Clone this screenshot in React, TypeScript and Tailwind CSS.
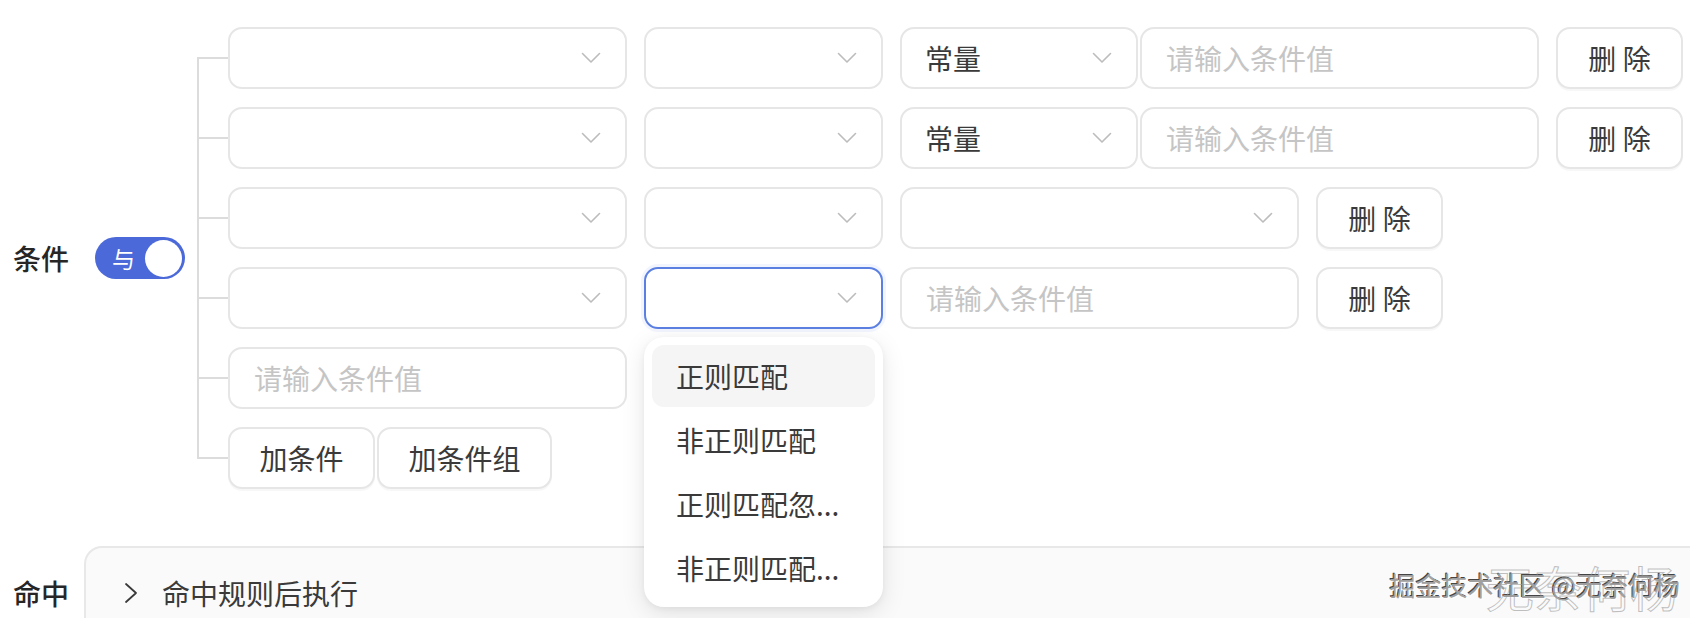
import React from "react";

const font = "font-['Noto_Sans_CJK_SC','Noto_Sans',sans-serif]";

function Chevron({ className = "" }: { className?: string }) {
  return (
    <svg width="20" height="12" viewBox="0 0 20 12" className={className} fill="none">
      <path d="M1.5 1.5 L10 10 L18.5 1.5" stroke="#bcbcbc" strokeWidth="1.6" strokeLinecap="round" strokeLinejoin="round" />
    </svg>
  );
}

function Select({ w, value, focused }: { w: string; value?: string; focused?: boolean }) {
  return (
    <div
      className={`flex h-[62px] ${w} items-center justify-between rounded-[14px] border-2 bg-white pl-[23px] pr-[24px] ${
        focused ? "border-[#5b80e2] shadow-[0_0_0_3px_rgba(91,128,226,0.08)]" : "border-[#e6e6e6]"
      }`}
    >
      <span className="text-[28px] leading-none text-[#3a3a3a]">{value}</span>
      <Chevron />
    </div>
  );
}

function Input({ w }: { w: string }) {
  return (
    <div className={`flex h-[62px] ${w} items-center rounded-[14px] border-2 border-[#e6e6e6] bg-white px-[24px]`}>
      <span className="text-[28px] leading-none text-[#c5c5c5]">请输入条件值</span>
    </div>
  );
}

function Button({ label, w }: { label: string; w: string }) {
  return (
    <button
      className={`flex h-[62px] ${w} items-center justify-center rounded-[14px] border-2 border-[#e6e6e6] bg-white text-[28px] leading-none text-[#3a3a3a] shadow-[0_2px_0_rgba(0,0,0,0.03)]`}
    >
      {label}
    </button>
  );
}

function Branch({ first, last, children }: { first?: boolean; last?: boolean; children: React.ReactNode }) {
  return (
    <div className="flex">
      <div className="flex w-[31px] flex-col">
        <div className={`flex-1 ${first ? "" : "border-l-2 border-[#dcdcdc]"}`} />
        <div className="h-[2px] bg-[#dcdcdc]" />
        <div className={`flex-1 ${last ? "" : "border-l-2 border-[#dcdcdc]"}`} />
      </div>
      <div className="flex items-center py-[9px]">{children}</div>
    </div>
  );
}

const options = ["正则匹配", "非正则匹配", "正则匹配忽...", "非正则匹配..."];

function Dropdown() {
  return (
    <div className="absolute left-0 top-[calc(100%+8px)] z-10 flex w-[239px] flex-col gap-[2px] rounded-[20px] bg-white p-[8px] shadow-[0_6px_24px_rgba(0,0,0,0.1),0_2px_6px_rgba(0,0,0,0.05)]">
      {options.map((o, i) => (
        <div
          key={o}
          className={`flex h-[62px] items-center rounded-[12px] px-[24px] text-[28px] leading-none text-[#3a3a3a] ${
            i === 0 ? "bg-[#f5f5f5]" : ""
          }`}
        >
          {o}
        </div>
      ))}
    </div>
  );
}

export default function App() {
  return (
    <div className={`relative h-[618px] w-[1690px] overflow-hidden bg-white pt-[18px] ${font}`}>
      {/* 条件 */}
      <div className="flex items-center">
        <div className="w-[95px] pl-[13px] text-[28px] font-medium leading-none text-[#262626]">条件</div>
        <div className="flex h-[42px] w-[90px] items-center justify-between rounded-full bg-[#4b69d8] pl-[17px] pr-[3px]">
          <span className="text-[23px] leading-none text-white">与</span>
          <span className="h-[37px] w-[37px] rounded-full bg-white" />
        </div>
        <div className="ml-[12px] flex flex-col">
          <Branch first>
            <div className="flex">
              <Select w="w-[399px]" />
              <div className="ml-[17px]"><Select w="w-[239px]" /></div>
              <div className="ml-[17px]"><Select w="w-[238px]" value="常量" /></div>
              <div className="ml-[2px]"><Input w="w-[399px]" /></div>
              <div className="ml-[17px]"><Button label="删 除" w="w-[127px]" /></div>
            </div>
          </Branch>
          <Branch>
            <div className="flex">
              <Select w="w-[399px]" />
              <div className="ml-[17px]"><Select w="w-[239px]" /></div>
              <div className="ml-[17px]"><Select w="w-[238px]" value="常量" /></div>
              <div className="ml-[2px]"><Input w="w-[399px]" /></div>
              <div className="ml-[17px]"><Button label="删 除" w="w-[127px]" /></div>
            </div>
          </Branch>
          <Branch>
            <div className="flex gap-[17px]">
              <Select w="w-[399px]" />
              <Select w="w-[239px]" />
              <Select w="w-[399px]" />
              <Button label="删 除" w="w-[127px]" />
            </div>
          </Branch>
          <Branch>
            <div className="flex gap-[17px]">
              <Select w="w-[399px]" />
              <div className="relative">
                <Select w="w-[239px]" focused />
                <Dropdown />
              </div>
              <Input w="w-[399px]" />
              <Button label="删 除" w="w-[127px]" />
            </div>
          </Branch>
          <Branch>
            <Input w="w-[399px]" />
          </Branch>
          <Branch last>
            <div className="flex gap-[2px]">
              <Button label="加条件" w="w-[147px]" />
              <Button label="加条件组" w="w-[175px]" />
            </div>
          </Branch>
        </div>
      </div>

      {/* 命中 */}
      <div className="mt-[48px] flex items-start">
        <div className="mt-[30px] w-[84px] pl-[13px] text-[28px] font-medium leading-[34px] text-[#262626]">命中</div>
        <div className="h-[120px] flex-1 rounded-tl-[18px] border-l-2 border-t-2 border-[#e8e8e8] bg-[#fafafa] pt-[28px]">
          <div className="flex h-[34px] items-center pl-[38px]">
            <svg width="14" height="22" viewBox="0 0 14 22" fill="none">
              <path d="M2 2 L12 11 L2 20" stroke="#3a3a3a" strokeWidth="1.8" strokeLinecap="round" strokeLinejoin="round" />
            </svg>
            <span className="ml-[24px] text-[28px] leading-none text-[#3a3a3a]">命中规则后执行</span>
          </div>
        </div>
      </div>

      {/* watermark */}
      <div className="pointer-events-none absolute right-[10px] top-[572px] text-[26px] leading-none text-[#a0a0a0] [text-shadow:1px_1px_0_#fff,-1px_-1px_0_#444]">
        掘金技术社区 @无奈何杨
      </div>
      <div className="pointer-events-none absolute right-[12px] top-[562px] text-[48px] leading-none text-transparent [-webkit-text-stroke:1px_rgba(150,150,150,0.6)]">
        无奈何杨
      </div>
    </div>
  );
}
